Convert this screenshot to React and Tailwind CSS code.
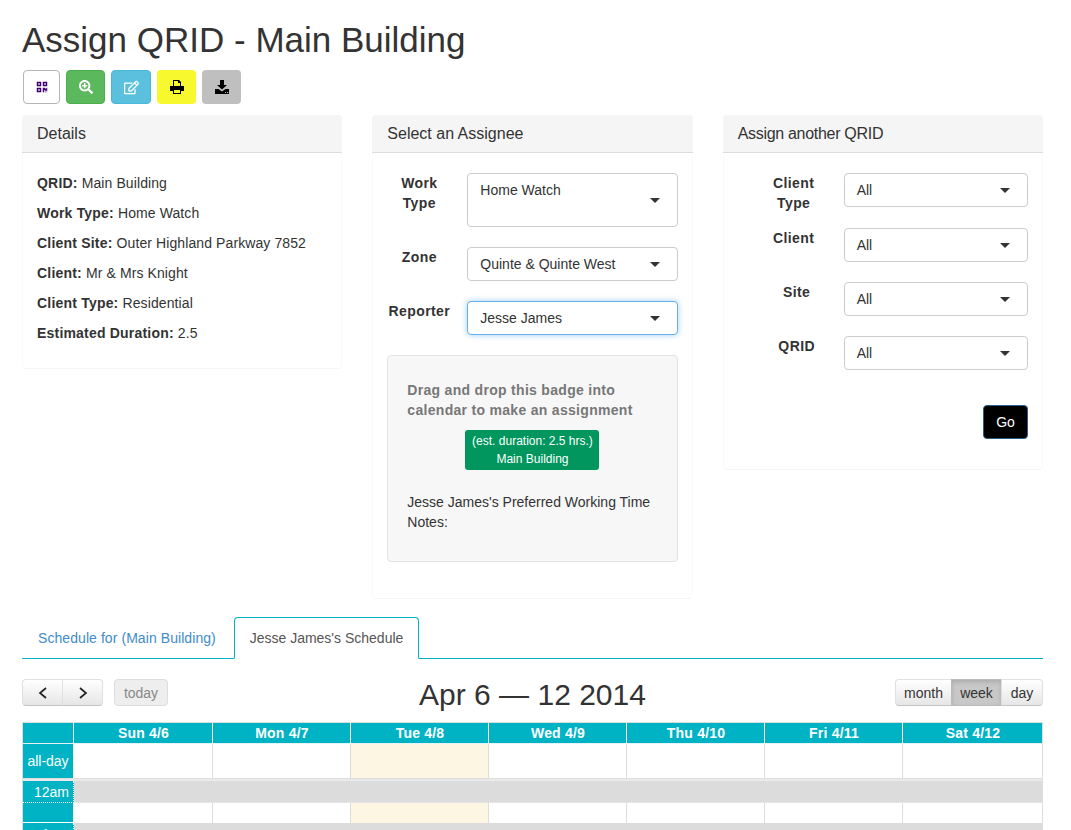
import { FaQrcode, FaSearchPlus, FaRegEdit } from "react-icons/fa";

function DownloadIcon() {
  return (
    <svg viewBox="0 0 14 14" className="w-[14px] h-[14px]" fill="currentColor">
      <path d="M5 0h4v5h3L7 9.5 2 5h3z" />
      <path d="M0 9h3.5L7 11.5 10.5 9H14v5H0z" />
      <path d="M10 12h1v1h-1zM12 12h1v1h-1z" fill="#bfbfbf" />
    </svg>
  );
}

function PrintIcon() {
  return (
    <svg viewBox="0 0 14 14" className="w-[14px] h-[14px]" fill="currentColor">
      <path d="M3 0h6l2 2v4H10V3H8V1H4v5H3z" />
      <path d="M0 6h14v5h-3V9H3v2H0z" />
      <path d="M3 9h8v5H3zm1 1v3h6v-3z" fill="currentColor" fillRule="evenodd" />
    </svg>
  );
}

function Panel({ title, children, className = "" }) {
  return (
    <div className={`flex-1 border border-[#fafafa] border-b-[#f5f5f5] rounded ${className}`}>
      <div className="bg-[#f5f5f5] border-b border-[#ddd] rounded-t px-[15px] h-[38px] text-base leading-[38px] -mx-px -mt-px">
        {title}
      </div>
      {children}
    </div>
  );
}

function Select({ value, focus, tall }) {
  return (
    <div
      className={`flex-1 flex items-center justify-between pl-3 pr-[17px] bg-white rounded border ${tall ? "h-[54px]" : "h-[34px]"} ${focus ? "border-[#66afe9] shadow-[0_0_6px_rgba(102,175,233,0.6)]" : "border-[#ccc]"}`}
    >
      <span className={tall ? "self-start mt-1.5" : ""}>{value}</span>
      <span className="w-0 h-0 border-x-[5px] border-x-transparent border-t-[5px] border-t-[#333]" />
    </div>
  );
}

function Row({ label, value, focus, tall, labelW }) {
  return (
    <div className="flex">
      <div className={`font-bold text-center tracking-[0.4px] shrink-0 ${labelW}`}>{label}</div>
      <Select value={value} focus={focus} tall={tall} />
    </div>
  );
}

const days = ["Sun 4/6", "Mon 4/7", "Tue 4/8", "Wed 4/9", "Thu 4/10", "Fri 4/11", "Sat 4/12"];
const calCols = "grid grid-cols-[51px_139px_138px_138px_138px_138px_138px_139px]";

function WhiteCells({ h }) {
  return days.map((d, i) => (
    <div
      key={d}
      className={`${h} ${i === 2 ? "bg-[#fcf6e3]" : "bg-white"} ${i < 6 ? "border-r border-[#ddd]" : ""}`}
    />
  ));
}

function HourRow({ label }) {
  return (
    <>
      <div className="flex">
        <div className="w-[51px] h-[22px] bg-[#00b3c4] text-white text-right pr-1 border-r border-white leading-[23px] border-b border-dotted border-b-white">
          {label}
        </div>
        <div className="flex-1 h-[22px] bg-[#dcdcdc] border-b border-dotted border-b-[#eee]" />
      </div>
      <div className={calCols}>
        <div className="h-[20px] bg-[#00b3c4] border-r border-b border-white" />
        <WhiteCells h="h-[20px]" />
      </div>
    </>
  );
}

const btnFc = "h-[27px] flex items-center justify-center border border-[#e0e0e0] border-b-[#c4c4c4] bg-gradient-to-b from-white to-[#e6e6e6] text-[#333]";

export default function App() {
  return (
    <div className="h-[830px] overflow-hidden bg-white pl-[22px] pr-[28px] text-sm leading-5 text-[#333] font-['Liberation_Sans',Arial,sans-serif]">
      <h1 className="pt-5 text-[35px] leading-[40px] font-normal">Assign QRID - Main Building</h1>

      <div className="flex gap-[6px] mt-[10px] ml-px">
        <button className="w-[37px] h-[34px] flex items-center justify-center rounded border border-[#b5b5b5] bg-white text-[#400070]">
          <FaQrcode size={12} />
        </button>
        <button className="w-[39px] h-[34px] flex items-center justify-center rounded border border-[#4cae4c] bg-[#5cb85c] text-white">
          <FaSearchPlus size={14} />
        </button>
        <button className="w-[40px] h-[34px] flex items-center justify-center rounded border border-[#46b8da] bg-[#5bc0de] text-white">
          <FaRegEdit size={15} />
        </button>
        <button className="w-[39px] h-[34px] flex items-center justify-center rounded bg-[#f8f82f] text-black">
          <PrintIcon />
        </button>
        <button className="w-[39px] h-[34px] flex items-center justify-center rounded bg-[#bfbfbf] text-black">
          <DownloadIcon />
        </button>
      </div>

      <div className="flex items-start gap-[30px] mt-[11px]">
        <Panel title="Details" className="h-[254px]">
          <div className="pl-[14px] pr-[15px] pt-5 flex flex-col gap-[10px] tracking-[0.1px]">
            <p><b className="tracking-[0.2px]">QRID:</b> Main Building</p>
            <p><b className="tracking-[0.2px]">Work Type:</b> Home Watch</p>
            <p><b className="tracking-[0.2px]">Client Site:</b> Outer Highland Parkway 7852</p>
            <p><b className="tracking-[0.2px]">Client:</b> Mr &amp; Mrs Knight</p>
            <p><b className="tracking-[0.2px]">Client Type:</b> Residential</p>
            <p><b className="tracking-[0.2px]">Estimated Duration:</b> 2.5</p>
          </div>
        </Panel>

        <Panel title="Select an Assignee" className="h-[484px]">
          <div className="px-[14px] pt-5 flex flex-col gap-5">
            <Row label={<>Work<br />Type</>} value="Home Watch" tall labelW="w-[64px] mr-4" />
            <Row label="Zone" value="Quinte & Quinte West" labelW="w-[64px] mr-4" />
            <Row label="Reporter" value="Jesse James" focus labelW="w-[64px] mr-4" />
            <div className="h-[207px] bg-[#f7f7f7] border border-[#e3e3e3] rounded px-[19px] pt-6">
              <p className="font-bold text-[#777] tracking-[0.3px]">Drag and drop this badge into calendar to make an assignment</p>
              <div className="flex justify-center mt-[10px]">
                <div className="w-[134px] h-10 rounded-[3px] bg-[#00965e] text-white text-xs leading-[18px] text-center pt-[2px]">
                  (est. duration: 2.5 hrs.)<br />Main Building
                </div>
              </div>
              <p className="mt-[22px]">Jesse James's Preferred Working Time</p>
              <p>Notes:</p>
            </div>
          </div>
        </Panel>

        <Panel title={<span className="tracking-[-0.3px]">Assign another QRID</span>} className="h-[355px]">
          <div className="px-[14px] pt-5 flex flex-col gap-5">
            <Row label={<>Client<br />Type</>} value="All" labelW="w-[106px] pl-[6px] -mb-[5px]" />
            <Row label="Client" value="All" labelW="w-[106px] pl-[6px]" />
            <Row label="Site" value="All" labelW="w-[106px] pl-3" />
            <Row label="QRID" value="All" labelW="w-[106px] pl-3" />
            <div className="flex justify-end mt-[15px]">
              <button className="w-[45px] h-[34px] rounded border border-[#285e8e] bg-black text-white">Go</button>
            </div>
          </div>
        </Panel>
      </div>

      <div className="flex items-end h-[42px] mt-[18px] border-b border-[#00b3c4] pl-4">
        <div className="w-[196px] h-[41px] leading-[43px] tracking-[0.07px] text-[#428bca]">Schedule for (Main Building)</div>
        <div className="w-[185px] h-[42px] -mb-px bg-white border border-[#00b3c4] border-b-white rounded-t text-center leading-[41px] text-[#555]">
          Jesse James's Schedule
        </div>
      </div>

      <div className="flex items-center justify-between mt-5 h-[27px]">
        <div className="flex items-center">
          <button className={`${btnFc} w-[41px] rounded-l`}>
            <svg viewBox="0 0 10 12" className="w-[10px] h-[12px]" fill="none" stroke="#222" strokeWidth="1.7"><path d="M8 1 2 6l6 5" /></svg>
          </button>
          <button className={`${btnFc} w-[41px] rounded-r -ml-px`}>
            <svg viewBox="0 0 10 12" className="w-[10px] h-[12px]" fill="none" stroke="#222" strokeWidth="1.7"><path d="m2 1 6 5-6 5" /></svg>
          </button>
          <button className="ml-[11px] w-[54px] h-[27px] rounded border border-[#ddd] bg-[#eee] text-[#888]">today</button>
        </div>
        <h2 className="text-[30px] leading-[33px] font-normal ml-[2px] pt-1">Apr 6 — 12 2014</h2>
        <div className="flex items-center">
          <button className={`${btnFc} w-[57px] rounded-l`}>month</button>
          <button className="h-[27px] w-[51px] -ml-px border border-[#bbb] bg-[#c8c8c8] text-[#333] shadow-[inset_0_2px_4px_rgba(0,0,0,0.15)]">week</button>
          <button className={`${btnFc} w-[42px] rounded-r -ml-px`}>day</button>
        </div>
      </div>

      <div className="mt-[16px] border-x border-t border-[#ddd]">
        <div className={`${calCols} border-b border-[#e4f4f6]`}>
          <div className="h-5 bg-[#00b3c4] border-r border-white" />
          {days.map((d, i) => (
            <div key={d} className={`h-5 bg-[#00b3c4] text-white font-bold text-center pl-px tracking-[0.2px] ${i < 6 ? "border-r border-white" : ""}`}>
              {d}
            </div>
          ))}
        </div>
        <div className={`${calCols} border-b border-[#ddd]`}>
          <div className="h-[34px] bg-[#00b3c4] text-white border-r border-white text-center leading-[34px]">all-day</div>
          <WhiteCells h="h-[34px]" />
        </div>
        <div className="h-[2px] bg-[#eaeaea]" />
        <HourRow label="12am" />
        <HourRow label="1am" />
      </div>
    </div>
  );
}
